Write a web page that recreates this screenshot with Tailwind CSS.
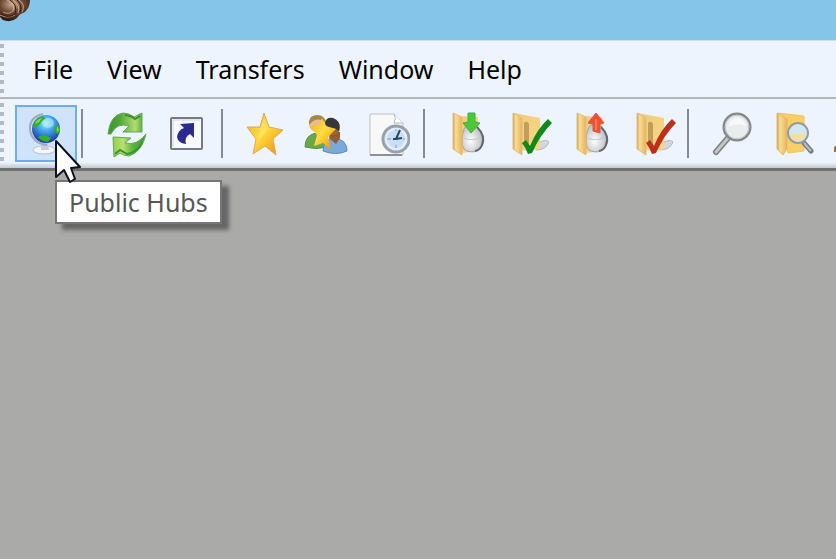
<!DOCTYPE html>
<html lang="en">

<head>
    <meta charset="UTF-8">
    <meta name="viewport" content="width=device-width, initial-scale=1.0">
    <title>Public Hubs</title>
    <script src="https://cdn.jsdelivr.net/npm/@tailwindcss/browser@4"></script>
</head>

<body class="min-h-screen flex flex-col overflow-hidden bg-[#aaaaa9] text-black font-['Noto_Sans','Open_Sans',sans-serif]">

    <!-- shared gradients and icon parts -->
    <svg class="absolute w-0 h-0" aria-hidden="true">
        <defs>
            <linearGradient id="folder" x1="0" x2="1" y1="0" y2="1">
                <stop offset="0" stop-color="#f0ca7c" /><stop offset="1" stop-color="#f9d787" />
            </linearGradient>
            <linearGradient id="folderFront" x1="0" x2="1">
                <stop offset="0" stop-color="#c9a35c" /><stop offset=".3" stop-color="#fbdc94" /><stop offset="1" stop-color="#e3b55c" />
            </linearGradient>
            <linearGradient id="gold" x1="0" x2="1" y1="0" y2="1">
                <stop offset="0" stop-color="#f0a818" /><stop offset=".45" stop-color="#ffdf40" /><stop offset="1" stop-color="#ee8408" />
            </linearGradient>
            <linearGradient id="leaf" x1="0" x2="1">
                <stop offset="0" stop-color="#3c9430" /><stop offset=".35" stop-color="#4fa83a" /><stop offset=".8" stop-color="#b4dc74" /><stop offset="1" stop-color="#5fb044" />
            </linearGradient>
            <linearGradient id="leafBack" x1="0" x2="1">
                <stop offset="0" stop-color="#8fd04e" /><stop offset=".3" stop-color="#b8e070" /><stop offset=".6" stop-color="#5cb440" /><stop offset="1" stop-color="#3a9a30" />
            </linearGradient>
            <radialGradient id="sea" cx=".5" cy=".3" r=".7">
                <stop offset="0" stop-color="#a4eeff" /><stop offset=".4" stop-color="#44a8ea" /><stop offset="1" stop-color="#20309e" />
            </radialGradient>
            <radialGradient id="glass" cx=".5" cy=".45" r=".6">
                <stop offset="0" stop-color="#fbfdff" /><stop offset="1" stop-color="#c9dcee" />
            </radialGradient>
            <radialGradient id="mouse" cx=".4" cy=".6" r=".6">
                <stop offset="0" stop-color="#ffffff" /><stop offset="1" stop-color="#b9bcc0" />
            </radialGradient>
            <radialGradient id="shell" cx=".4" cy=".2" r=".8">
                <stop offset="0" stop-color="#c9ab90" /><stop offset=".5" stop-color="#6d4630" /><stop offset="1" stop-color="#2b120b" />
            </radialGradient>
            <g id="folderMouse">
                <path d="M14 4L34 5V39L18 41Z" fill="url(#folder)" />
                <path d="M21 15C18 20 17 33 20 37C24 41 34 41 37 36C41 30 39 21 34 16C30 11 24 11 21 15Z" fill="url(#mouse)" stroke="#a0a3a7" />
                <path d="M33 15Q42 24 38 33Q36 38 31 39" fill="none" stroke="#65686b" stroke-width="2" />
                <path d="M20 26Q28 30 37 25" fill="none" stroke="#c3c6ca" />
                <path d="M9 1L18 5V43L9 37Z" fill="url(#folderFront)" stroke="#e2bf78" stroke-width="1" />
            </g>
            <g id="folderCheck">
                <path d="M30 38Q40 38 43 30Q40 27 34 30Z" fill="#d5d7da" stroke="#b4b7ba" />
                <path d="M8 1L34 6V37L22 39L9 37Z" fill="url(#folder)" />
                <path d="M7 1L16 6V43L7 37Z" fill="url(#folderFront)" stroke="#e2bf78" stroke-width="1" />
                <path d="M18 11Q21 8 23 12V33L18 29Z" fill="#b18b4c" opacity=".75" />
                <path d="M16 31L20 28L24 34Q31 17 42 7L46 11Q34 23 26 41L22 42Q20 36 16 31Z" fill="currentColor" />
            </g>
        </defs>
    </svg>

    <header class="h-10 bg-[#86c5ea]">
        <svg class="w-8 h-6" viewBox="0 0 32 24">
            <path d="M0 0H30Q30 7 25 12Q19 14 17 18Q11 23 3 20L0 17Z" fill="url(#shell)" />
            <path d="M7 0Q16 4 13 11Q9 15 3 12M13 0Q21 6 18 13M19 0Q26 5 22 12M0 15Q8 19 15 15" fill="none" stroke="#d9c4ae" stroke-width="1" opacity=".7" />
            <path d="M10 0Q18 5 15 14Q9 19 1 14M17 0Q23 6 20 12" fill="none" stroke="#3a1a10" stroke-width="1" />
        </svg>
    </header>

    <nav class="flex h-[59px] bg-[#edf4fd] border-t border-[#c5e0f3] border-b-2 border-b-[#b3b6ba]">
        <span class="w-1 my-[3px] bg-[repeating-linear-gradient(#b4b8c0_0px_4px,transparent_4px_9px)]"></span>
        <ul class="flex items-center pl-3 text-[25px] leading-8">
            <li><button class="px-[17px]">File</button></li>
            <li><button class="px-[17px]">View</button></li>
            <li><button class="px-[17px]">Transfers</button></li>
            <li><button class="px-[17px]">Window</button></li>
            <li><button class="px-[17px]">Help</button></li>
        </ul>
    </nav>

    <div role="toolbar" class="flex h-[72px] bg-linear-to-b from-[#edf4fd] from-92% to-[#c4c8cf] border-b-3 border-[#6f6f70]">
        <span class="shrink-0 w-1 my-1 bg-[repeating-linear-gradient(#b4b8c0_0px_4px,transparent_4px_9px)]"></span>
        <div class="flex flex-1 min-w-0 items-start pt-[6px] pl-[11px] [&_svg]:shrink-0">
            <div class="relative">
                <button aria-label="Public Hubs" aria-describedby="tip" class="w-[62px] h-[57px] flex items-center justify-center bg-[#cfe4fa] border-2 border-[#6eaeec]">
                    <svg class="w-11 h-11" viewBox="0 0 44 44">
                        <ellipse cx="20" cy="38" rx="11" ry="4" fill="#f4f5fa" stroke="#b9bfd0" />
                        <path d="M17 31H24L25 38H17Z" fill="#c8cedf" />
                        <path d="M19 2Q5 5 6 18Q8 31 23 33" fill="none" stroke="#a0a9c0" stroke-width="2" />
                        <circle cx="22" cy="17" r="14" fill="url(#sea)" />
                        <path d="M9 16Q10 7 19 4L22 7L18 9L15 13L11 16ZM32 13Q37 14 36 20L33 22L30 18ZM14 25Q20 21 27 26L24 30Q18 30 14 25Z" fill="#30b02c" />
                        <path d="M11 12Q13 7 18 6L15 10ZM33 14L35 18L33 20Z" fill="#8fe23e" />
                        <ellipse cx="24" cy="11" rx="6" ry="5" fill="#c5f4ff" opacity=".5" />
                    </svg>
                </button>
                <div id="tip" role="tooltip" class="absolute left-10 top-[75px] h-11 px-3 flex items-center whitespace-nowrap bg-white border-2 border-[#777] text-[25px] leading-8 text-[#575757] shadow-[7px_6px_4px_#666]">Public Hubs</div>
                <svg class="absolute left-[38px] top-[33px] w-8 h-12" viewBox="-2 -2 32 48">
                    <path d="M1 1L1 37L9 30L15 42L20 39L16 28L25 27Z" fill="#fff" stroke="#101020" stroke-width="2" stroke-linejoin="round" />
                </svg>
            </div>
            <span class="shrink-0 w-4 h-[49px] mt-1 pl-1"><i class="block w-[2px] h-full bg-[#858a90]"></i></span>
            <button aria-label="Reconnect" class="shrink-0 w-[62px] h-[57px] flex items-center justify-center">
                <svg class="w-11 h-11 overflow-visible" viewBox="0 0 44 44">
                    <path d="M6 22Q8 3 21 1Q27 1 32 5L40 1V20H21L27 14Q15 10 9 22Z" fill="url(#leaf)" stroke="#63a856" />
                    <path d="M44 22Q40 40 27 44Q22 44 18 41L12 45L11 25L29 26L23 31Q35 34 44 22Z" fill="url(#leafBack)" stroke="#63aa52" />
                    <path d="M23 3Q30 4 33 7L38 4" fill="none" stroke="#3a8e2c" stroke-width="2" />
                    <path d="M40 31Q34 41 25 42L18 38L13 42" fill="none" stroke="#3a9430" stroke-width="2" />
                </svg>
            </button>
            <button aria-label="Follow redirect" class="shrink-0 w-[62px] h-[57px] flex items-center justify-center">
                <svg class="w-11 h-11" viewBox="0 0 44 44">
                    <rect x="7" y="6" width="31" height="31" rx="1" fill="#f6f9fe" stroke="#77797d" stroke-width="2" />
                    <path d="M9 35V8H36" fill="none" stroke="#cfd5df" />
                    <path d="M16 12L30 11V26L26 22Q20 25 22 32Q14 31 13 25Q14 18 20 16Z" fill="#2b2a8d" />
                </svg>
            </button>
            <span class="shrink-0 w-4 h-[49px] mt-1 pl-1"><i class="block w-[2px] h-full bg-[#858a90]"></i></span>
            <button aria-label="Favorite Hubs" class="shrink-0 w-[62px] h-[57px] flex items-center justify-center">
                <svg class="w-11 h-11" viewBox="0 0 44 44">
                    <path d="M22 1L27 15L41 18L31 27L34 43L23 34L11 42L14 27L5 15L18 15Z" fill="url(#gold)" stroke="#d9a868" stroke-linejoin="round" />
                    <path d="M22 5L25 18L17 28L18 17L8 17L19 16Z" fill="#fff08a" opacity=".4" />
                </svg>
            </button>
            <button aria-label="Favorite Users" class="shrink-0 w-[62px] h-[57px] flex items-center justify-center">
                <svg class="w-11 h-11" viewBox="0 0 44 44">
                    <path d="M1 35Q1 23 12 21Q22 22 23 35Q12 38 1 35Z" fill="#68a84b" stroke="#5c9048" />
                    <circle cx="13" cy="12" r="8" fill="#e9bd84" />
                    <path d="M5 13Q4 3 13 3Q21 3 22 11Q17 6 11 8Q8 9 5 13Z" fill="#a5884c" />
                    <path d="M19 39Q19 27 31 26Q43 28 43 39Q32 44 19 39Z" fill="#78aadb" stroke="#5c8cba" />
                    <path d="M25 26L32 32L36 26V20H26Z" fill="#925b31" />
                    <circle cx="28" cy="15" r="8" fill="#9e6435" />
                    <path d="M21 11Q22 5 29 6Q37 8 35 20Q33 16 28 16Q23 16 21 11Z" fill="#35373b" />
                    <path d="M18 6L22 14L32 17L24 25L27 38L19 31L10 34L13 23L6 14L15 14Z" fill="url(#gold)" />
                </svg>
            </button>
            <button aria-label="Recent Hubs" class="shrink-0 w-[62px] h-[57px] flex items-center justify-center">
                <svg class="w-11 h-11" viewBox="0 0 44 44">
                    <path d="M4 2H28L37 11V43H4Z" fill="#f8f8f8" stroke="#bcbec1" />
                    <path d="M4 43H36" stroke="#8d9094" stroke-width="2" />
                    <path d="M28 2Q31 7 28 11H37" fill="#fff" stroke="#b7b9bc" />
                    <circle cx="30" cy="27" r="13" fill="url(#glass)" stroke="#98a1ab" stroke-width="3" />
                    <circle cx="30" cy="27" r="10" fill="#c8dff4" stroke="#e4eef8" stroke-width="2" />
                    <path d="M21 27H25M30 33V36M37 27H39M30 17V19" stroke="#809bb6" />
                    <path d="M34 18L30 27H27M30 27L36 26" fill="none" stroke="#2d465f" stroke-width="2" />
                </svg>
            </button>
            <span class="shrink-0 w-4 h-[49px] mt-1 pl-1"><i class="block w-[2px] h-full bg-[#858a90]"></i></span>
            <button aria-label="Download Queue" class="shrink-0 w-[62px] h-[57px] flex items-center justify-center">
                <svg class="w-11 h-11" viewBox="0 0 44 44">
                    <use href="#folderMouse" />
                    <path d="M24 1H31V10L36 11L27 21L19 11L24 10Z" fill="#4bc73a" stroke="#45ae3a" />
                </svg>
            </button>
            <button aria-label="Finished Downloads" class="shrink-0 w-[62px] h-[57px] flex items-center justify-center text-[#0f8a18]">
                <svg class="w-11 h-11 overflow-visible" viewBox="0 0 44 44">
                    <use href="#folderCheck" />
                </svg>
            </button>
            <button aria-label="Waiting Users" class="shrink-0 w-[62px] h-[57px] flex items-center justify-center">
                <svg class="w-11 h-11" viewBox="0 0 44 44">
                    <use href="#folderMouse" />
                    <path d="M28 1L36 11L32 12V21L25 19V12L20 11Z" fill="#ee5034" stroke="#d9583e" />
                    <path d="M28 7V18" stroke="#ff7858" stroke-width="2" />
                </svg>
            </button>
            <button aria-label="Finished Uploads" class="shrink-0 w-[62px] h-[57px] flex items-center justify-center text-[#bb301c]">
                <svg class="w-11 h-11 overflow-visible" viewBox="0 0 44 44">
                    <use href="#folderCheck" />
                </svg>
            </button>
            <span class="shrink-0 w-4 h-[49px] mt-1 pl-1"><i class="block w-[2px] h-full bg-[#858a90]"></i></span>
            <button aria-label="Search" class="shrink-0 w-[62px] h-[57px] flex items-center justify-center">
                <svg class="w-11 h-11" viewBox="0 0 44 44">
                    <path d="M20 26L8 40" stroke="#7c8083" stroke-width="6" stroke-linecap="round" />
                    <path d="M20 26L8 40" stroke="#c3c5c7" stroke-width="3" stroke-linecap="round" />
                    <circle cx="29" cy="15" r="13" fill="#e9edf0" stroke="#84888b" stroke-width="3" />
                    <circle cx="29" cy="15" r="12" fill="none" stroke="#c9ccce" />
                    <path d="M20 15Q29 10 38 14Q36 6 29 6Q21 7 20 15Z" fill="#fff" opacity=".6" />
                </svg>
            </button>
            <button aria-label="ADL Search" class="shrink-0 w-[62px] h-[57px] flex items-center justify-center">
                <svg class="w-11 h-11" viewBox="0 0 44 44">
                    <path d="M8 1L34 4V39L18 41Z" fill="#f8cf67" stroke="#edc666" />
                    <path d="M7 1L17 7V37L13 43L7 37Z" fill="url(#folderFront)" stroke="#e3bb60" />
                    <path d="M34 31L41 39" stroke="#777c82" stroke-width="5" stroke-linecap="round" />
                    <path d="M34 31L41 39" stroke="#b9bec3" stroke-width="2" />
                    <circle cx="28" cy="21" r="10" fill="#d3e7ef" stroke="#949ba0" stroke-width="2" />
                    <path d="M20 22H36Q34 29 28 29Q22 29 20 22Z" fill="#f5dfa0" />
                </svg>
            </button>
            <button aria-label="Search Spy" class="flex-1 min-w-0 h-[57px] pl-[9px] flex items-center overflow-hidden">
                <svg class="w-11 h-11" viewBox="0 0 44 44">
                    <path d="M2 35L9 30V40H2Z" fill="#97772f" />
                </svg>
            </button>
        </div>
    </div>

    <main class="flex-1"></main>
</body>

</html>
